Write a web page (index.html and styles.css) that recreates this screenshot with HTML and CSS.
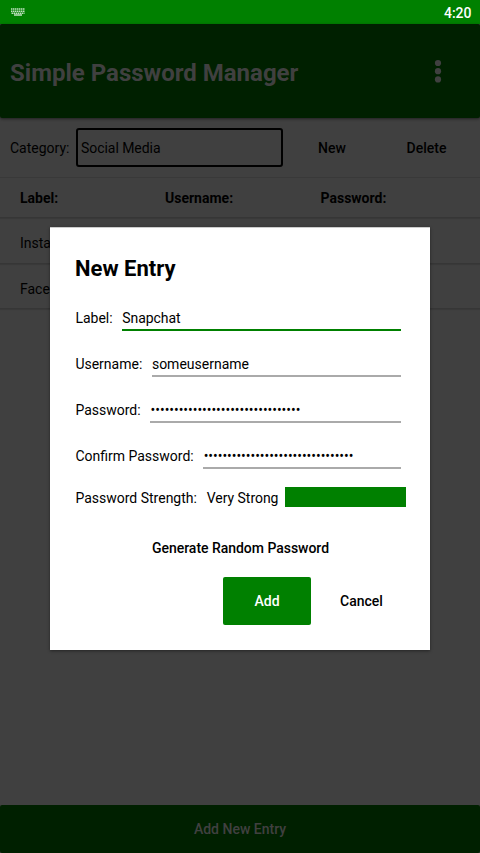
FILE: index.html
```html
<!DOCTYPE html>
<html lang="en">
<head>
<meta charset="utf-8">
<title>Simple Password Manager</title>
<link rel="stylesheet" href="styles.css">
</head>
<body>
<div class="screen">
  <div class="status">
    <svg class="keyboard" width="14" height="8" viewBox="0 0 14 8">
      <path d="M0 1h14M0 3.2h14M0.5 5.2h13" stroke="#bfe0bf" stroke-width="1.4" stroke-dasharray="1.5 .5"/>
      <path d="M3 7h8" stroke="#bfe0bf" stroke-width="1.5"/>
    </svg>
    <span class="clock">4:20</span>
  </div>
  <header class="header">
    <h1>Simple Password Manager</h1>
    <svg class="more" width="8" height="24" viewBox="0 0 8 24" fill="#404040">
      <circle cx="4" cy="4" r="3.1"/><circle cx="4" cy="12.2" r="3.1"/><circle cx="4" cy="20.4" r="3.1"/>
    </svg>
  </header>
  <div class="category">
    <span class="category-label">Category:</span>
    <div class="select">Social Media</div>
    <span class="action new">New</span>
    <span class="action delete">Delete</span>
  </div>
  <div class="row head"><span>Label:</span><span>Username:</span><span>Password:</span></div>
  <div class="row"><span>Instagram</span></div>
  <div class="row"><span>Facebook</span></div>
  <div class="space"></div>
  <footer class="footer">Add New Entry</footer>

  <section class="dialog">
    <h2>New Entry</h2>
    <div class="field"><label>Label:</label><div class="input focused">Snapchat</div></div>
    <div class="field"><label>Username:</label><div class="input">someusername</div></div>
    <div class="field"><label>Password:</label><div class="input dots">••••••••••••••••••••••••••••••••</div></div>
    <div class="field"><label>Confirm Password:</label><div class="input dots">••••••••••••••••••••••••••••••••</div></div>
    <div class="strength"><span class="strength-label">Password Strength:</span><span class="strength-value">Very Strong</span><div class="meter"></div></div>
    <div class="generate">Generate Random Password</div>
    <div class="buttons"><div class="button add">Add</div><div class="button cancel">Cancel</div></div>
  </section>
</div>
</body>
</html>
```
FILE: styles.css
```css
* { box-sizing: border-box; }
body { margin: 0; background: #404040; font-family: Roboto, sans-serif; font-size: 14px; color: #000; }
h1, h2 { margin: 0; font-weight: 700; }
.screen { position: relative; width: 480px; height: 853px; display: flex; flex-direction: column; overflow: hidden; }
.status { height: 24px; flex: none; background: #008000; display: flex; justify-content: space-between; align-items: flex-start; padding: 8px 8.5px 0 11px; }
.clock { color: #fff; font-size: 14px; font-weight: 500; line-height: 16px; margin-top: -3px; }
.header { height: 94px; flex: none; background: #002000; border-radius: 2px; box-shadow: 0 1px 3px rgba(0,0,0,.5); display: flex; align-items: center; justify-content: space-between; padding: 1px 38px 0 10px; color: #404040; }
.more { margin-bottom: 2px; }
h1 { font-size: 24px; line-height: 28px; white-space: nowrap; padding-top: 2px; }
.category { height: 60px; flex: none; display: flex; align-items: center; padding-left: 10px; border-bottom: 1px solid #393939; }
.category-label { width: 66px; padding-top: 1px; }
.select { width: 207px; height: 39px; border: 2px solid #000; border-radius: 3px; line-height: 36px; padding-left: 3px; letter-spacing: -.05px; }
.action { font-weight: 500; text-align: center; padding-top: 1px; }
.new { width: 98px; }
.delete { width: 91px; }
.row { height: 45.5px; flex: none; display: flex; align-items: center; padding: 6px 0 0 20px; border-bottom: 1px solid #363636; box-shadow: 0 1px 1px rgba(0,0,0,.1); }
.head { height: 40px; padding-top: 1px; font-weight: 700; }
.head span:nth-child(1) { width: 145px; }
.head span:nth-child(2) { width: 155.5px; }
.space { flex: 1; }
.footer { height: 48px; flex: none; background: #002000; border-radius: 2px; color: #404040; font-weight: 500; text-align: center; line-height: 49px; }
.dialog { position: absolute; left: 50px; top: 227px; width: 380px; height: 423px; background: #fff; box-shadow: 0 1px 3px rgba(0,0,0,.45); border-top: 1px solid #ccc; padding: 27px 24px 0 25px; }
h2 { font-size: 22px; line-height: 28px; margin-bottom: 13px; }
.field { height: 46px; display: flex; align-items: flex-start; padding: 0 5px 0 .4px; gap: 9.6px; }
.field label { line-height: 45px; white-space: nowrap; }
.input { flex: 1; height: 35px; padding-top: 10px; line-height: 25px; border-bottom: 2px solid #aaa; }
.focused { border-color: #008000; letter-spacing: -.06px; }
.dots { letter-spacing: -.045px; padding-left: .4px; }
.strength { display: flex; height: 20px; margin-top: 7px; align-items: center; padding-left: .4px; }
.strength-label, .strength-value { padding-top: 1px; }
.strength-label { width: 131.4px; }
.strength-value { width: 78px; white-space: nowrap; letter-spacing: -.04px; }
.meter { flex: 1; height: 20px; background: #008000; }
.generate { width: 331px; text-align: center; font-weight: 500; line-height: 20px; margin-top: 31px; letter-spacing: -.03px; }
.buttons { display: flex; padding-left: 148px; margin-top: 19px; }
.button { height: 48px; flex: none; line-height: 49px; text-align: center; font-weight: 500; }
.add { width: 88px; background: #008000; border-radius: 2px; color: #fff; }
.cancel { width: 101px; }
```
